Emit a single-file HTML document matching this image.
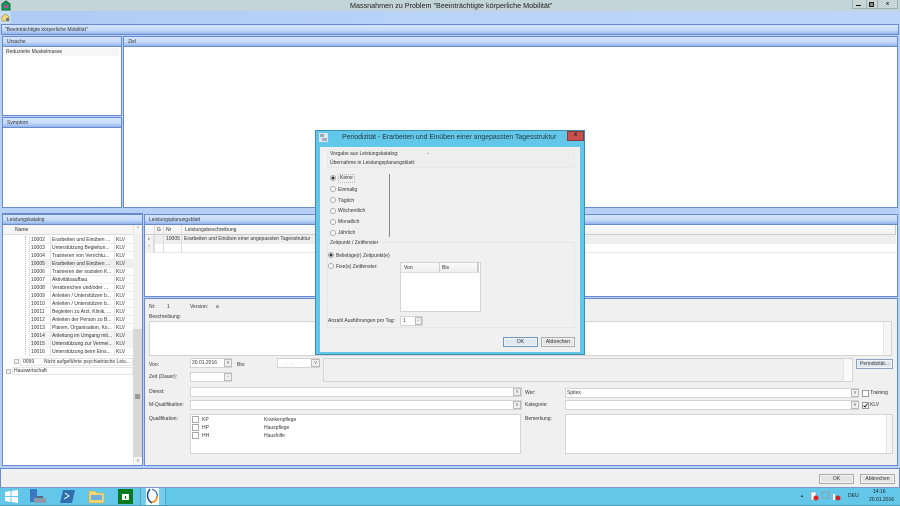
<!DOCTYPE html>
<html lang="de"><head><meta charset="utf-8"><title>Massnahmen</title>
<style>
html,body{margin:0;padding:0;background:#b7d1f6}
#r{position:relative;width:900px;height:506px;overflow:hidden;font:5px/8px "Liberation Sans",sans-serif;color:#333;background:#b7d1f6;filter:blur(.3px)}
#r div,#r svg{position:absolute;box-sizing:border-box}
.t{white-space:nowrap;height:8px}
.p{background:#fff;border:1px solid #6a8ad0}
.h{background:linear-gradient(#d3e4fb,#c6dbfa 55%,#93b4ea);border:1px solid #6a8ad0;padding:1px 4px;height:11px;line-height:8px}
.i{background:#fff;border:1px solid #d4d4d4}
.d{background:#f0f0f0;border:1px solid #bbb;font-size:5px;text-align:center;color:#666;line-height:6px}
.b{background:#e4e4e4;border:1px solid #aaa;text-align:center;line-height:9px;box-shadow:inset 0 0 0 1px #f4f4f4}
.c{background:#fff;border:1px solid #999;width:7px;height:7px}
.ra{width:6px;height:6px;border-radius:50%;background:#fff;border:1px solid #aaa}
.ra.s{background:radial-gradient(#333 45%,#eee 55%)}
.s1{background:#f6f6f6;border-left:1px solid #e4e4e4;text-align:center;color:#888;font-size:5px;line-height:8px}
</style></head><body><div id="r">

<!-- Title bar -->
<div style="left:0;top:0;width:900px;height:11px;background:#c3d5d8"></div>
<svg style="left:1px;top:0" width="10" height="11" viewBox="0 0 10 11"><path d="M1 10V4l4-3 4 3v6z" fill="#1a9a5a" stroke="#0a6a3a"/><rect x="3" y="5" width="4" height="3" fill="#c04a9a"/></svg>
<div class="t" style="left:350px;top:1px;font-size:7.2px;line-height:9px;color:#222">Massnahmen zu Problem "Beeinträchtigte körperliche Mobilität"</div>
<div style="left:852px;top:0;width:46px;height:9px;background:#c9d6d8;border:1px solid #9fb0b2;border-top:0"></div>
<div style="left:866px;top:0;width:1px;height:9px;background:#9fb0b2"></div>
<div style="left:877px;top:0;width:1px;height:9px;background:#9fb0b2"></div>
<div style="left:856px;top:5px;width:5px;height:1px;background:#111"></div>
<div style="left:869px;top:2px;width:5px;height:5px;border:1px solid #222;background:#888"></div>
<div class="t" style="left:886px;top:0;font-size:5.5px;line-height:8px;font-weight:bold;color:#222">x</div>

<!-- Ribbon -->
<div style="left:0;top:11px;width:900px;height:13px;background:linear-gradient(90deg,#aecbf5,#b9d3f8 50%,#bdd5f8)"></div>
<div style="left:0;top:11px;width:11px;height:13px;background:#c7dcf9;border-radius:2px"></div>
<svg style="left:1px;top:13px" width="9" height="9" viewBox="0 0 9 9"><path d="M1 8V4l3.5-3L8 4v4z" fill="#f3d98a" stroke="#b89a40" stroke-width=".8"/><rect x="5" y="5" width="3" height="3" fill="#777"/></svg>

<!-- Top bar -->
<div class="h" style="left:1px;top:24px;width:898px;height:11px;padding-left:3px">"Beeinträchtigte körperliche Mobilität"</div>

<!-- Ursache -->
<div class="p" style="left:2px;top:36px;width:120px;height:80px"></div>
<div class="h" style="left:2px;top:36px;width:120px">Ursache</div>
<div style="left:4px;top:48px;width:115px;height:8px;background:#f6f6f6"></div>
<div class="t" style="left:6px;top:48px">Reduzierte Muskelmasse</div>

<!-- Symptom -->
<div class="p" style="left:2px;top:117px;width:120px;height:91px"></div>
<div class="h" style="left:2px;top:117px;width:120px">Symptom</div>

<!-- Ziel -->
<div class="p" style="left:123px;top:36px;width:775px;height:172px"></div>
<div class="h" style="left:123px;top:36px;width:775px">Ziel</div>

<!-- Leistungskatalog -->
<div class="p" style="left:2px;top:213px;width:141px;height:253px"></div>
<div class="h" style="left:2px;top:214px;width:141px">Leistungskatalog</div>
<div style="left:3px;top:225px;width:130px;height:10px;background:#f5f5f5;border-bottom:1px solid #ddd"></div>
<div class="t" style="left:15px;top:226px">Name</div>
<div style="left:133px;top:225px;width:9px;height:240px;background:#d8d8d8"></div>
<div class="s1" style="left:133px;top:225px;width:9px;height:9px">^</div>
<div class="s1" style="left:133px;top:457px;width:9px;height:8px">v</div>
<div style="left:133px;top:234px;width:9px;height:95px;background:#f0f0f0"></div>
<div style="left:135px;top:394px;width:5px;height:5px;background:#9a9a9a"></div>

<div style="left:29px;top:236px;width:104px;height:120px;background:repeating-linear-gradient(#fff 0 7px,#eee 7px 8px);border-left:1px solid #e6e6e6"></div>
<div style="left:29px;top:260px;width:104px;height:8px;background:#eee"></div>
<div style="left:29px;top:332px;width:104px;height:8px;background:#f4f4f4"></div>
<div style="left:29px;top:340px;width:104px;height:8px;background:#f4f4f4"></div>
<div style="left:50px;top:236px;width:1px;height:120px;background:#e6e6e6"></div>
<div style="left:114px;top:236px;width:1px;height:120px;background:#e6e6e6"></div>
<div style="left:25px;top:236px;width:1px;height:118px;border-left:1px dotted #bbb"></div>

<div class="t" style="left:31px;top:236px">10002</div><div class="t" style="left:52px;top:236px">Erarbeiten und Einüben ...</div><div class="t" style="left:116px;top:236px">KLV</div>
<div class="t" style="left:31px;top:244px">10003</div><div class="t" style="left:52px;top:244px">Unterstützung Begleitun...</div><div class="t" style="left:116px;top:244px">KLV</div>
<div class="t" style="left:31px;top:252px">10004</div><div class="t" style="left:52px;top:252px">Trainieren von Verrichtu...</div><div class="t" style="left:116px;top:252px">KLV</div>
<div class="t" style="left:31px;top:260px">10005</div><div class="t" style="left:52px;top:260px">Erarbeiten und Einüben ...</div><div class="t" style="left:116px;top:260px">KLV</div>
<div class="t" style="left:31px;top:268px">10006</div><div class="t" style="left:52px;top:268px">Trainieren der sozialen K...</div><div class="t" style="left:116px;top:268px">KLV</div>
<div class="t" style="left:31px;top:276px">10007</div><div class="t" style="left:52px;top:276px">Aktivitätsaufbau</div><div class="t" style="left:116px;top:276px">KLV</div>
<div class="t" style="left:31px;top:284px">10008</div><div class="t" style="left:52px;top:284px">Verabreichen und/oder ...</div><div class="t" style="left:116px;top:284px">KLV</div>
<div class="t" style="left:31px;top:292px">10009</div><div class="t" style="left:52px;top:292px">Anleiten / Unterstützen b...</div><div class="t" style="left:116px;top:292px">KLV</div>
<div class="t" style="left:31px;top:300px">10010</div><div class="t" style="left:52px;top:300px">Anleiten / Unterstützen b...</div><div class="t" style="left:116px;top:300px">KLV</div>
<div class="t" style="left:31px;top:308px">10011</div><div class="t" style="left:52px;top:308px">Begleiten zu Arzt, Klinik, ...</div><div class="t" style="left:116px;top:308px">KLV</div>
<div class="t" style="left:31px;top:316px">10012</div><div class="t" style="left:52px;top:316px">Anleiten der Person zu B...</div><div class="t" style="left:116px;top:316px">KLV</div>
<div class="t" style="left:31px;top:324px">10013</div><div class="t" style="left:52px;top:324px">Planen, Organisation, Ko...</div><div class="t" style="left:116px;top:324px">KLV</div>
<div class="t" style="left:31px;top:332px">10014</div><div class="t" style="left:52px;top:332px">Anleitung im Umgang mit...</div><div class="t" style="left:116px;top:332px">KLV</div>
<div class="t" style="left:31px;top:340px">10015</div><div class="t" style="left:52px;top:340px">Unterstützung zur Vermei...</div><div class="t" style="left:116px;top:340px">KLV</div>
<div class="t" style="left:31px;top:348px">10016</div><div class="t" style="left:52px;top:348px">Unterstützung beim Eins...</div><div class="t" style="left:116px;top:348px">KLV</div>

<div style="left:14px;top:359px;width:5px;height:5px;background:#eee;border:1px solid #bbb"></div>
<div style="left:20px;top:358px;width:113px;height:8px;background:#fff;border:1px solid #e6e6e6"></div>
<div class="t" style="left:23px;top:358px">0099</div><div class="t" style="left:44px;top:358px">Nicht aufgeführte psychiatrische Leis...</div>
<div style="left:6px;top:369px;width:5px;height:5px;background:#eee;border:1px solid #bbb"></div>
<div style="left:12px;top:367px;width:121px;height:8px;background:#fff;border:1px solid #e6e6e6"></div>
<div class="t" style="left:14px;top:367px">Hauswirtschaft</div>

<!-- Leistungsplanungsblatt -->
<div class="p" style="left:144px;top:214px;width:754px;height:83px"></div>
<div class="h" style="left:144px;top:214px;width:754px">Leistungsplanungsblatt</div>
<div style="left:145px;top:225px;width:751px;height:10px;background:linear-gradient(#fbfbfb,#f1f1f1);border-bottom:1px solid #ccc;border-right:1px solid #ccc"></div>
<div style="left:145px;top:235px;width:751px;height:9px;background:#eee"></div>
<div style="left:145px;top:244px;width:751px;height:9px;background:#fff;border-bottom:1px solid #e8e8e8"></div>
<div style="left:145px;top:235px;width:9px;height:18px;background:#f2f2f2;border-right:1px solid #ddd"></div>
<div style="left:154px;top:225px;width:1px;height:28px;background:#ddd"></div>
<div style="left:163px;top:225px;width:1px;height:28px;background:#ddd"></div>
<div style="left:181px;top:225px;width:1px;height:28px;background:#ddd"></div>
<div class="t" style="left:157px;top:226px">G</div>
<div class="t" style="left:166px;top:226px">Nr</div>
<div class="t" style="left:185px;top:226px">Leistungsbeschreibung</div>
<div class="t" style="left:148px;top:235px;color:#999">▸</div>
<div class="t" style="left:148px;top:244px;color:#999">*</div>
<div class="t" style="left:166px;top:235px">10005</div>
<div class="t" style="left:184px;top:235px">Erarbeiten und Einüben einer angepassten Tagesstruktur</div>

<!-- Detail -->
<div style="left:144px;top:298px;width:754px;height:168px;background:#f0f0f0;border:1px solid #6a8ad0"></div>
<div class="t" style="left:149px;top:303px">Nr:</div><div class="t" style="left:167px;top:303px">1</div>
<div class="t" style="left:190px;top:303px">Version:</div><div class="t" style="left:216px;top:303px">a</div>
<div class="t" style="left:149px;top:313px">Beschreibung:</div>
<div class="i" style="left:149px;top:321px;width:743px;height:35px"></div>
<div class="s1" style="left:883px;top:322px;width:8px;height:33px"></div>
<div class="t" style="left:149px;top:361px">Von:</div>
<div class="i" style="left:190px;top:358px;width:42px;height:10px"></div>
<div class="t" style="left:192px;top:359px">20.01.2016</div>
<div class="d" style="left:224px;top:359px;width:8px;height:8px">v</div>
<div class="t" style="left:237px;top:361px">Bis:</div>
<div class="i" style="left:277px;top:358px;width:43px;height:10px"></div>
<div class="t" style="left:285px;top:359px;color:#777">. &nbsp; .</div>
<div class="d" style="left:311px;top:359px;width:9px;height:8px">v</div>
<div style="left:323px;top:358px;width:530px;height:24px;background:#f0f0f0;border:1px solid #d4d4d4"></div>
<div style="left:843px;top:359px;width:9px;height:22px;background:#fafafa;border-left:1px solid #e4e4e4"></div>
<div class="b" style="left:856px;top:359px;width:37px;height:10px;line-height:8px;background:#dfe7f1;border-color:#8aa2c4">Periodizität...</div>
<div class="t" style="left:149px;top:373px">Zeit (Dauer):</div>
<div class="i" style="left:190px;top:372px;width:42px;height:10px"></div>
<div class="d" style="left:224px;top:373px;width:8px;height:8px;font-size:4px">^</div>

<div class="t" style="left:149px;top:388px">Dienst:</div>
<div class="i" style="left:190px;top:387px;width:332px;height:10px"></div>
<div class="d" style="left:513px;top:388px;width:8px;height:8px">v</div>
<div class="t" style="left:149px;top:401px">M-Qualifikation:</div>
<div class="i" style="left:190px;top:400px;width:332px;height:10px"></div>
<div class="d" style="left:513px;top:401px;width:8px;height:8px">v</div>
<div class="t" style="left:149px;top:415px">Qualifikation:</div>
<div class="i" style="left:190px;top:414px;width:331px;height:40px"></div>
<div class="c" style="left:192px;top:416px;border-color:#aaa"></div><div class="t" style="left:202px;top:416px">KP</div><div class="t" style="left:264px;top:416px">Krankenpflege</div>
<div class="c" style="left:192px;top:424px;border-color:#aaa"></div><div class="t" style="left:202px;top:424px">HP</div><div class="t" style="left:264px;top:424px">Hauspflege</div>
<div class="c" style="left:192px;top:432px;border-color:#aaa"></div><div class="t" style="left:202px;top:432px">HH</div><div class="t" style="left:264px;top:432px">Haushilfe</div>

<div class="t" style="left:525px;top:389px">Wer:</div>
<div class="i" style="left:565px;top:388px;width:294px;height:10px"></div>
<div class="t" style="left:567px;top:389px">Spitex</div>
<div class="d" style="left:851px;top:389px;width:8px;height:8px">v</div>
<div class="c" style="left:862px;top:390px"></div><div class="t" style="left:870px;top:389px">Training</div>
<div class="t" style="left:525px;top:401px">Kategorie:</div>
<div class="i" style="left:565px;top:400px;width:294px;height:10px"></div>
<div class="d" style="left:851px;top:401px;width:8px;height:8px">v</div>
<div class="c" style="left:862px;top:402px"></div>
<svg style="left:862px;top:402px" width="7" height="7" viewBox="0 0 7 7"><path d="M1.500 3.500l1.500 1.500 2.500-3.500" fill="none" stroke="#222" stroke-width="1"/></svg>
<div class="t" style="left:870px;top:401px">KLV</div>
<div class="t" style="left:525px;top:415px">Bemerkung:</div>
<div class="i" style="left:565px;top:414px;width:328px;height:40px"></div>
<div class="s1" style="left:886px;top:415px;width:6px;height:38px"></div>

<!-- Bottom bar -->
<div style="left:0;top:468px;width:900px;height:19px;background:#f0f0f0;border:1px solid #6a8ad0;border-bottom:0"></div>
<div class="b" style="left:819px;top:474px;width:35px;height:10px;line-height:8px">OK</div>
<div class="b" style="left:860px;top:474px;width:35px;height:10px;line-height:8px">Abbrechen</div>

<!-- Taskbar -->
<div style="left:0;top:487px;width:900px;height:19px;background:#62c7e9;border-top:1px solid #7f97c9;border-bottom:1px solid #4a9ab8"></div>
<svg style="left:5px;top:490px" width="13" height="13" viewBox="0 0 13 13"><path d="M0 2l5.500-1v5H0zM6.500 1L13 0v6H6.500zM0 7h5.500v5L0 11zM6.500 7H13v6l-6.500-1z" fill="#fff"/></svg>
<svg style="left:29px;top:488px" width="18" height="17" viewBox="0 0 18 17"><rect x="1" y="1" width="7" height="13" fill="#3a78c0"/><rect x="5" y="10" width="12" height="5" fill="#8a9aa8"/><rect x="8" y="8" width="6" height="2" fill="#5a6a78"/></svg>
<svg style="left:60px;top:490px" width="15" height="13" viewBox="0 0 15 13"><path d="M3 0h12l-3 13H0z" fill="#2f6fb0"/><path d="M5 3l4 3-5 3" fill="none" stroke="#fff"/></svg>
<svg style="left:88px;top:489px" width="17" height="15" viewBox="0 0 17 15"><path d="M1 2h6l2 2h7v10H1z" fill="#f2d675" stroke="#c9a84a" stroke-width=".5"/><rect x="3" y="6" width="11" height="5" fill="#6fb0d8"/></svg>
<svg style="left:118px;top:489px" width="15" height="15" viewBox="0 0 15 15"><rect width="15" height="15" fill="#0a7a1e"/><path d="M4 5h7v6H4z" fill="#fff"/><path d="M7 7h1v3H7z" fill="#0a7a1e"/></svg>
<div style="left:140px;top:488px;width:26px;height:17px;background:rgba(255,255,255,.12);border-left:1px solid #4fa5c2;border-right:1px solid #4fa5c2"></div>
<svg style="left:146px;top:488px" width="13" height="17" viewBox="0 0 13 17"><rect width="13" height="17" fill="#fff"/><path d="M4 1C0 6 1 12 6 15" fill="none" stroke="#1a4a9a" stroke-width="1.500"/><path d="M6 1c5 2 6 6 5 9" fill="none" stroke="#2a6ac0" stroke-width="1.200"/><path d="M11 8c0 4-2 6-5 6" fill="none" stroke="#e89a20" stroke-width="1.800"/></svg>

<div class="t" style="left:800px;top:492px;font-size:4px;color:#333">▲</div>
<svg style="left:810px;top:491px" width="32" height="11" viewBox="0 0 32 11"><path d="M1 1h5v8H1z" fill="#f4f4f4" stroke="#999" stroke-width=".5"/><circle cx="6" cy="7" r="2.500" fill="#d22"/><rect x="12" y="1" width="7" height="6" fill="none" stroke="#8fa0a0"/><path d="M24 3v6" stroke="#fff" stroke-width="2"/><circle cx="28" cy="7" r="2.500" fill="#d22"/></svg>
<div class="t" style="left:848px;top:492px;color:#222">DEU</div>
<div class="t" style="left:873px;top:488px;color:#222">14:16</div>
<div class="t" style="left:869px;top:496px;color:#222">20.01.2016</div>

<!-- Dialog -->
<div style="left:315px;top:130px;width:270px;height:225px;background:#62c7e9;border:1px solid #3b8fb0"></div>
<div style="left:320px;top:147px;width:260px;height:205px;background:#f0f0f0"></div>
<svg style="left:319px;top:133px" width="9" height="9" viewBox="0 0 9 9"><rect width="9" height="9" fill="#dfe6ee"/><rect x="1" y="1" width="4" height="3" fill="#9ab"/><rect x="3" y="5" width="5" height="3" fill="#aab"/></svg>
<div class="t" style="left:342px;top:133px;font-size:6.9px;line-height:9px;color:#1f3a44">Periodizität - Erarbeiten und Einüben einer angepassten Tagesstruktur</div>
<div style="left:567px;top:131px;width:17px;height:10px;background:#c75050;border:1px solid #8a3a3a;color:#222;text-align:center;font-size:6px;line-height:7px;font-weight:bold">x</div>

<div style="left:327px;top:149px;width:248px;height:19px;background:#eee;border:1px solid #e8e8e8"></div>
<div class="t" style="left:330px;top:150px">Vorgabe aus Leistungskatalog:</div>
<div class="t" style="left:427px;top:150px">-</div>
<div class="t" style="left:330px;top:159px">Übernahme in Leistungsplanungsblatt:</div>

<div class="ra s" style="left:330px;top:175px"></div>
<div class="t" style="left:338px;top:174px;border:1px dotted #bbb;padding:0 1px;height:9px;line-height:7px">Keine</div>
<div class="ra" style="left:330px;top:186px"></div><div class="t" style="left:338px;top:186px">Einmalig</div>
<div class="ra" style="left:330px;top:197px"></div><div class="t" style="left:338px;top:197px">Täglich</div>
<div class="ra" style="left:330px;top:208px"></div><div class="t" style="left:338px;top:207px">Wöchentlich</div>
<div class="ra" style="left:330px;top:219px"></div><div class="t" style="left:338px;top:218px">Monatlich</div>
<div class="ra" style="left:330px;top:230px"></div><div class="t" style="left:338px;top:229px">Jährlich</div>
<div style="left:389px;top:174px;width:1px;height:63px;background:#888"></div>

<div style="left:327px;top:242px;width:248px;height:86px;border:1px solid #e6e6e6"></div>
<div class="t" style="left:330px;top:239px;background:#f0f0f0;padding-right:1px">Zeitpunkt / Zeitfenster</div>
<div class="ra s" style="left:328px;top:252px"></div><div class="t" style="left:336px;top:252px">Beliebige(r) Zeitpunkt(e)</div>
<div class="ra" style="left:328px;top:263px"></div><div class="t" style="left:336px;top:263px">Fixe(s) Zeitfenster:</div>
<div class="i" style="left:400px;top:262px;width:81px;height:50px"></div>
<div style="left:401px;top:263px;width:78px;height:10px;background:linear-gradient(#fafafa,#eee);border-bottom:1px solid #ddd;border-right:2px solid #ccc"></div>
<div style="left:439px;top:263px;width:1px;height:10px;background:#ccc"></div>
<div class="t" style="left:404px;top:264px">Von</div><div class="t" style="left:442px;top:264px">Bis</div>
<div class="t" style="left:328px;top:317px">Anzahl Ausführungen pro Tag:</div>
<div class="i" style="left:400px;top:316px;width:23px;height:10px"></div>
<div class="t" style="left:403px;top:317px">1</div>
<div class="d" style="left:415px;top:317px;width:7px;height:8px;font-size:4px">^</div>

<div class="b" style="left:503px;top:337px;width:35px;height:10px;line-height:8px;background:#dfe7f1;border-color:#6f9ac0">OK</div>
<div class="b" style="left:541px;top:337px;width:34px;height:10px;line-height:8px">Abbrechen</div>

</div></body></html>
